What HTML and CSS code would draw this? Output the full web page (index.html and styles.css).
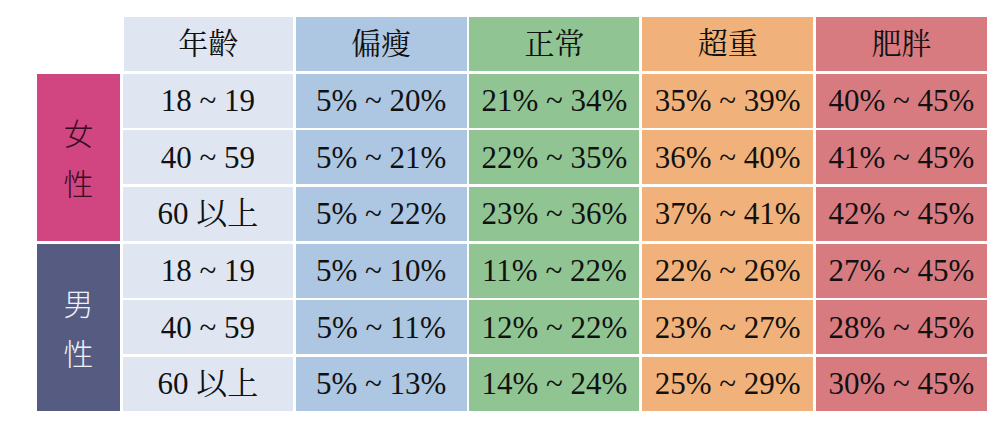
FILE: index.html
```html
<!DOCTYPE html>
<html lang="zh-Hant">
<head>
<meta charset="utf-8">
<link rel="stylesheet" href="styles.css">
</head>
<body>
<div class="table">
  <div class="blank"></div>
  <div class="cell age head">年齡</div>
  <div class="cell thin head">偏瘦</div>
  <div class="cell normal head">正常</div>
  <div class="cell over head">超重</div>
  <div class="cell obese head">肥胖</div>

  <div class="gender female"><span>女</span><span>性</span></div>
  <div class="cell age">18 ~ 19</div>
  <div class="cell thin">5% ~ 20%</div>
  <div class="cell normal">21% ~ 34%</div>
  <div class="cell over">35% ~ 39%</div>
  <div class="cell obese">40% ~ 45%</div>

  <div class="cell age">40 ~ 59</div>
  <div class="cell thin">5% ~ 21%</div>
  <div class="cell normal">22% ~ 35%</div>
  <div class="cell over">36% ~ 40%</div>
  <div class="cell obese">41% ~ 45%</div>

  <div class="cell age">60 以上</div>
  <div class="cell thin">5% ~ 22%</div>
  <div class="cell normal">23% ~ 36%</div>
  <div class="cell over">37% ~ 41%</div>
  <div class="cell obese">42% ~ 45%</div>

  <div class="gender male"><span>男</span><span>性</span></div>
  <div class="cell age">18 ~ 19</div>
  <div class="cell thin">5% ~ 10%</div>
  <div class="cell normal">11% ~ 22%</div>
  <div class="cell over">22% ~ 26%</div>
  <div class="cell obese">27% ~ 45%</div>

  <div class="cell age">40 ~ 59</div>
  <div class="cell thin">5% ~ 11%</div>
  <div class="cell normal">12% ~ 22%</div>
  <div class="cell over">23% ~ 27%</div>
  <div class="cell obese">28% ~ 45%</div>

  <div class="cell age">60 以上</div>
  <div class="cell thin">5% ~ 13%</div>
  <div class="cell normal">14% ~ 24%</div>
  <div class="cell over">25% ~ 29%</div>
  <div class="cell obese">30% ~ 45%</div>
</div>
</body>
</html>
```
FILE: styles.css
```css
html, body {
  margin: 0;
  padding: 0;
  background: #ffffff;
}
body {
  width: 1000px;
  height: 432px;
  overflow: hidden;
  font-family: "Liberation Serif", "Noto Serif CJK TC", "Noto Sans CJK TC", serif;
  color: #111111;
}
.table {
  display: grid;
  grid-template-columns: 83px 170px 171px 170px 171px 171px;
  grid-template-rows: repeat(7, 54px);
  column-gap: 2.8px;
  row-gap: 2.67px;
  margin: 17px 0 0 37px;
  width: 951px;
}
.table > .cell:nth-child(2) {
  margin-left: 1px;
}
.cell {
  display: flex;
  align-items: center;
  justify-content: center;
  font-size: 31px;
  line-height: 1;
  white-space: nowrap;
}
.head {
  font-size: 30px;
}
.age { background: #dfe6f2; }
.thin { background: #adc6e1; }
.normal { background: #90c593; }
.over { background: #f0b27a; }
.obese { background: #d77b81; }
.gender {
  grid-row: span 3;
  display: flex;
  flex-direction: column;
  align-items: center;
  justify-content: center;
  font-size: 30px;
  line-height: 50px;
  font-family: "Noto Sans CJK TC", sans-serif;
  font-weight: 300;
}
.female {
  background: #d14680;
  color: #3a0b24;
}
.male {
  background: #555b81;
  color: #eef0f6;
}
```
